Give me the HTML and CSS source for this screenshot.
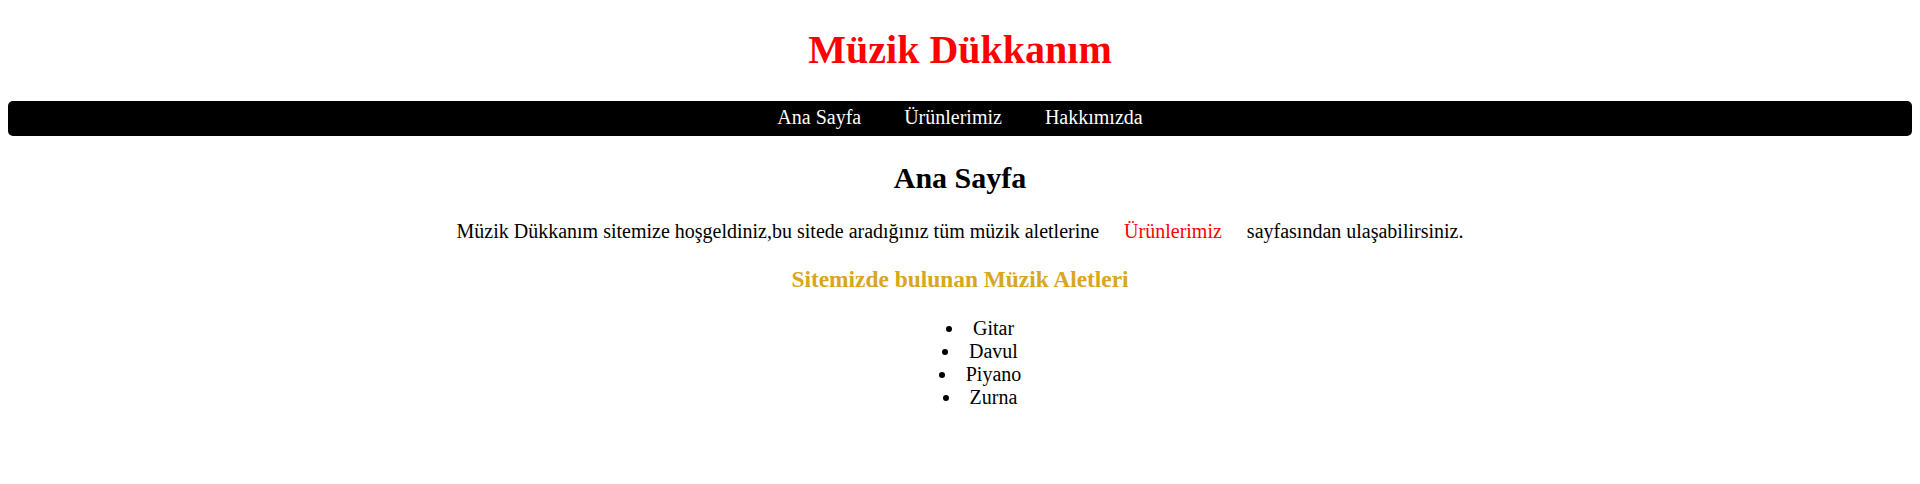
FILE: index.html
```html
<!DOCTYPE html>
<html lang="tr">
<head>
<meta charset="utf-8">
<title>Müzik Dükkanım</title>
<link rel="stylesheet" href="styles.css">
</head>
<body>
<header class="site-header">
  <h1 class="site-title">Müzik Dükkanım</h1>
</header>
<nav class="main-nav">
  <a class="nav-link" href="#">Ana Sayfa</a>
  <a class="nav-link" href="#">Ürünlerimiz</a>
  <a class="nav-link" href="#">Hakkımızda</a>
</nav>
<main class="content">
  <h2 class="page-title">Ana Sayfa</h2>
  <p class="intro">Müzik Dükkanım sitemize hoşgeldiniz,bu sitede aradığınız tüm müzik aletlerine <a class="inline-link" href="#">Ürünlerimiz</a> sayfasından ulaşabilirsiniz.</p>
  <h3 class="section-title">Sitemizde bulunan Müzik Aletleri</h3>
  <ul class="instrument-list">
    <li>Gitar</li>
    <li>Davul</li>
    <li>Piyano</li>
    <li>Zurna</li>
  </ul>
</main>
</body>
</html>
```
FILE: styles.css
```css
html, body {
  background: #ffffff;
}
body {
  margin: 8px;
  font-family: "Liberation Serif", "Times New Roman", serif;
  font-size: 20px;
  color: #000000;
  text-align: center;
}
.site-title {
  color: #ff0000;
  font-size: 40px;
  font-weight: bold;
  margin: 18px 0 28px;
}
.main-nav {
  background: #000000;
  border-radius: 5px;
  padding: 5px 0 7px;
  text-align: center;
}
.nav-link {
  color: #ffffff;
  text-decoration: none;
  padding: 0 19px;
}
.page-title {
  font-size: 30px;
  font-weight: bold;
  margin: 25px 0;
}
.intro {
  margin: 20px 0;
}
.inline-link {
  color: #ff0000;
  text-decoration: none;
  padding: 0 20px;
}
.section-title {
  color: #daa520;
  font-size: 23.4px;
  font-weight: bold;
  margin: 23.4px 0;
}
.instrument-list {
  list-style: disc inside;
  margin: 20px 0;
  padding-left: 40px;
}
```
